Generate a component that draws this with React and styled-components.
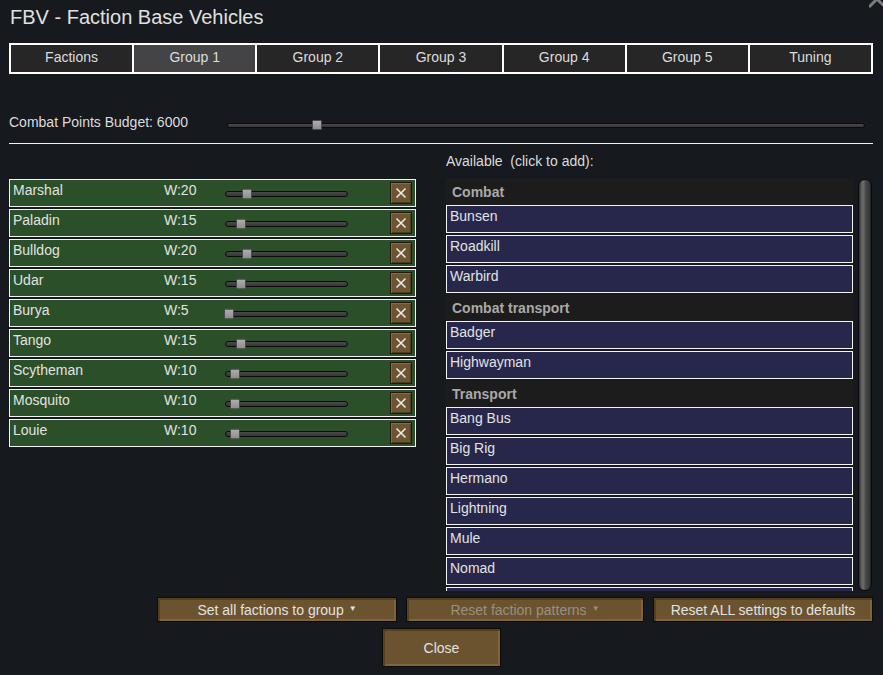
import React from "react";
import styled, { createGlobalStyle } from "styled-components";

const Global = createGlobalStyle`
  html, body { margin: 0; padding: 0; background: #16191e; }
  body { width: 883px; height: 675px; overflow: hidden; font-family: "Liberation Sans", Arial, sans-serif; color: #dcdcdc; }
  * { box-sizing: border-box; }
`;

const Window = styled.div`
  position: relative;
  width: 883px;
  height: 675px;
  padding: 0 10px 0 9px;
  display: flex;
  flex-direction: column;
`;

const CornerClose = styled.svg`
  position: absolute;
  right: 0;
  top: 0;
`;

const Title = styled.div`
  margin: 5px 0 0 1px;
  font-size: 20px;
  line-height: 24px;
  color: #e0e0e0;
`;

const TabStrip = styled.div`
  margin-top: 14px;
  display: flex;
  height: 31px;
  border: 1px solid #fff;
`;

const Tab = styled.div`
  flex: 1;
  border: 1px solid #fff;
  background: ${(p) => (p.$active ? "#444446" : "#262626")};
  display: flex;
  align-items: center;
  justify-content: center;
  padding-bottom: 3px;
  font-size: 14px;
  color: #dcdcdc;
`;

const BudgetRow = styled.div`
  margin-top: 38px;
  height: 20px;
  display: flex;
  align-items: center;
`;

const BudgetLabel = styled.div`
  width: 218px;
  font-size: 14px;
  line-height: 20px;
`;

const Track = styled.div`
  position: relative;
  height: ${(p) => p.$h}px;
  border: 1px solid #0b0b0b;
  border-radius: 3px;
  background: linear-gradient(#4a4a4a, #363636);
`;

const BudgetTrack = styled(Track)`
  flex: 1;
  margin: 6px 8px 0 0;
`;

const Thumb = styled.div`
  position: absolute;
  top: 50%;
  width: 10px;
  height: ${(p) => p.$h}px;
  transform: translateY(-50%);
  background: linear-gradient(#aeaeae, #8c8c8c);
  border: 1px solid #4a4a4a;
  border-radius: 1px;
`;

const Separator = styled.div`
  margin-top: 11px;
  height: 1px;
  background: #f2f2f2;
`;

const Columns = styled.div`
  display: flex;
  gap: 30px;
  height: 447px;
`;

const LeftCol = styled.div`
  width: 407px;
  padding-top: 35px;
  display: flex;
  flex-direction: column;
  gap: 2px;
`;

const WeightRow = styled.div`
  height: 28px;
  border: 1px solid #f4f4f4;
  background: #2b4f28;
  display: flex;
  align-items: center;
  padding: 0 3px;
  font-size: 14px;
  line-height: 16px;
`;

const RowName = styled.div`
  width: 151px;
  align-self: flex-start;
  padding-top: 2px;
  color: #e2e2e2;
`;

const RowWeight = styled.div`
  width: 61px;
  align-self: flex-start;
  padding-top: 2px;
  color: #e2e2e2;
`;

const RowTrack = styled(Track)`
  width: 123px;
  margin-top: 2px;
`;

const Spacer = styled.div`
  flex: 1;
`;

const RemoveBtn = styled.div`
  width: 22px;
  height: 22px;
  margin-top: -1px;
  background: #6d5532;
  border: 1px solid #22190c;
  box-shadow: inset 1px 1px 0 #8a6c40, inset -1px -1px 0 #4d3b1f;
  display: flex;
  align-items: center;
  justify-content: center;
`;

const RightCol = styled.div`
  flex: 1;
  display: flex;
  flex-direction: column;
`;

const AvailLabel = styled.div`
  margin-top: 7px;
  font-size: 14px;
  line-height: 20px;
  color: #dcdcdc;
`;

const ListWrap = styled.div`
  margin-top: 8px;
  display: flex;
  height: 412px;
`;

const List = styled.div`
  width: 407px;
  height: 412px;
  overflow: hidden;
`;

const CatHeader = styled.div`
  height: 26px;
  background: #1c1c1c;
  padding: 0 6px 1px;
  display: flex;
  align-items: center;
  font-size: 14px;
  font-weight: bold;
  color: #a9a9a9;
`;

const Item = styled.div`
  height: 28px;
  margin-bottom: 2px;
  border: 1px solid #f4f4f4;
  background: #27274b;
  padding: 2px 3px;
  font-size: 14px;
  line-height: 16px;
  color: #e2e2e2;
`;

const Scrollbar = styled.div`
  margin-left: 5px;
  width: 14px;
  height: 412px;
  border: 1px solid #0a0a0a;
  border-radius: 7px;
  background: linear-gradient(
    90deg,
    #2a2a2a 0,
    #5a5a5a 18%,
    #6c6c6c 35%,
    #4a4a4a 55%,
    #3c3c3c 80%,
    #222 100%
  );
`;

const ButtonRow = styled.div`
  margin-top: 6px;
  display: flex;
  justify-content: flex-end;
  gap: 9px;
`;

const BrownButton = styled.div`
  width: ${(p) => p.$w}px;
  height: ${(p) => p.$h || 25}px;
  background: #6b5330;
  border: 1px solid #0e0c08;
  box-shadow: inset 2px 2px 0 #54411f, inset -2px -2px 0 #806539;
  display: flex;
  align-items: center;
  justify-content: center;
  gap: 5px;
  font-size: 14px;
  color: ${(p) => (p.$disabled ? "#9a8f7e" : "#e2e2e2")};
`;

const Caret = styled.span`
  font-size: 8px;
  line-height: 1;
  margin-top: -2px;
`;

const CloseRow = styled.div`
  margin-top: 6px;
  display: flex;
  justify-content: center;
  padding-left: 1px;
`;

const XIcon = () => (
  <svg width="12" height="12" viewBox="0 0 12 12">
    <path d="M1.5 1.5 L10.5 10.5 M10.5 1.5 L1.5 10.5" stroke="#ececec" strokeWidth="1.5" fill="none" />
  </svg>
);

const tabs = ["Factions", "Group 1", "Group 2", "Group 3", "Group 4", "Group 5", "Tuning"];

const rows = [
  ["Marshal", 20],
  ["Paladin", 15],
  ["Bulldog", 20],
  ["Udar", 15],
  ["Burya", 5],
  ["Tango", 15],
  ["Scytheman", 10],
  ["Mosquito", 10],
  ["Louie", 10],
];

const categories = [
  ["Combat", ["Bunsen", "Roadkill", "Warbird"]],
  ["Combat transport", ["Badger", "Highwayman"]],
  ["Transport", ["Bang Bus", "Big Rig", "Hermano", "Lightning", "Mule", "Nomad", ""]],
];

export default function App() {
  return (
    <>
      <Global />
      <Window>
        <CornerClose width="14" height="10" viewBox="0 0 14 10">
          <path d="M0 7 L16 -9 M0 -9 L16 7" stroke="#7c7c7c" strokeWidth="3" fill="none" />
        </CornerClose>
        <Title>FBV - Faction Base Vehicles</Title>
        <TabStrip>
          {tabs.map((t) => (
            <Tab key={t} $active={t === "Group 1"}>
              {t}
            </Tab>
          ))}
        </TabStrip>
        <BudgetRow>
          <BudgetLabel>Combat Points Budget: 6000</BudgetLabel>
          <BudgetTrack $h={5}>
            <Thumb $h={10} style={{ left: 84 }} />
          </BudgetTrack>
        </BudgetRow>
        <Separator />
        <Columns>
          <LeftCol>
            {rows.map(([name, w]) => (
              <WeightRow key={name}>
                <RowName>{name}</RowName>
                <RowWeight>W:{w}</RowWeight>
                <RowTrack $h={6}>
                  <Thumb $h={11} style={{ left: -2 + ((w - 5) / 95) * 113 }} />
                </RowTrack>
                <Spacer />
                <RemoveBtn>
                  <XIcon />
                </RemoveBtn>
              </WeightRow>
            ))}
          </LeftCol>
          <RightCol>
            <AvailLabel>Available&nbsp; (click to add):</AvailLabel>
            <ListWrap>
              <List>
                {categories.map(([cat, items]) => (
                  <React.Fragment key={cat}>
                    <CatHeader>{cat}</CatHeader>
                    {items.map((it, i) => (
                      <Item key={cat + i}>{it}</Item>
                    ))}
                  </React.Fragment>
                ))}
              </List>
              <Scrollbar />
            </ListWrap>
          </RightCol>
        </Columns>
        <ButtonRow>
          <BrownButton $w={240}>
            Set all factions to group <Caret>▼</Caret>
          </BrownButton>
          <BrownButton $w={238} $disabled>
            Reset faction patterns <Caret>▼</Caret>
          </BrownButton>
          <BrownButton $w={220}>Reset ALL settings to defaults</BrownButton>
        </ButtonRow>
        <CloseRow>
          <BrownButton $w={119} $h={39}>
            Close
          </BrownButton>
        </CloseRow>
      </Window>
    </>
  );
}
